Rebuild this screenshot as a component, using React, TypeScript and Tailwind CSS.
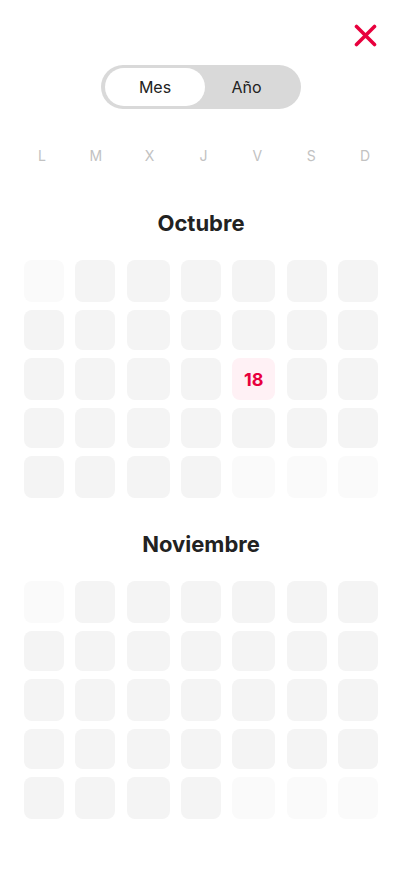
import React from 'react';

const days = ['L', 'M', 'X', 'J', 'V', 'S', 'D'];

type Cell = { faded?: boolean; today?: string };

function buildMonth(fadedStart: number[], fadedEnd: number[], today?: { index: number; label: string }): Cell[] {
  const cells: Cell[] = [];
  for (let i = 0; i < 35; i++) {
    const cell: Cell = {};
    if (fadedStart.includes(i) || fadedEnd.includes(i)) cell.faded = true;
    if (today && today.index === i) cell.today = today.label;
    cells.push(cell);
  }
  return cells;
}

const months = [
  { name: 'Octubre', cells: buildMonth([0], [32, 33, 34], { index: 18, label: '18' }) },
  { name: 'Noviembre', cells: buildMonth([0], [32, 33, 34]) },
];

function MonthGrid({ name, cells, first }: { name: string; cells: Cell[]; first?: boolean }) {
  return (
    <section className={first ? 'mt-[43px]' : 'mt-[32px]'}>
      <h2 className="text-center text-[22px] leading-[28px] font-bold text-[#222222]">{name}</h2>
      <div className="mt-[23px] grid grid-cols-[40px_40px_43px_40px_43px_40px_40px] grid-rows-[42px_40px_42px_40px_42px] justify-between gap-y-2 px-[24px]">
        {cells.map((c, i) => (
          <div
            key={i}
            className={
              c.today
                ? 'flex items-center justify-center rounded-[8px] bg-[#fff1f5] text-[18px] font-bold text-[#e8003d]'
                : c.faded
                ? 'rounded-[8px] bg-[#fafafa]'
                : 'rounded-[8px] bg-[#f4f4f4]'
            }
          >
            {c.today}
          </div>
        ))}
      </div>
    </section>
  );
}

export default function App() {
  return (
    <div className="min-h-[874px] w-full bg-white pt-[24px] font-['Inter','Liberation_Sans',sans-serif]">
      <div className="flex justify-end pr-[25px]">
        <button aria-label="Cerrar" className="h-[23px] w-[23px]">
          <svg viewBox="0 0 23 23" width="23" height="23" fill="none" stroke="#e8003d" strokeWidth="3.6" strokeLinecap="round">
            <path d="M2.5 2.5L20.5 20.5M20.5 2.5L2.5 20.5" />
          </svg>
        </button>
      </div>

      <div className="mx-auto mt-[18px] flex h-[44px] w-[200px] items-center rounded-full bg-[#d9d9d9] pl-[4px] pr-[3px]">
        <div className="flex h-[38px] w-[100px] items-center justify-center rounded-full bg-white text-[16px] text-[#222222]">
          Mes
        </div>
        <div className="flex flex-1 items-center justify-center pr-[10px] text-[16px] text-[#222222]">Año</div>
      </div>

      <div className="mt-[37px] grid grid-cols-7 pl-[15px] pr-[10px] text-center text-[14px] leading-[20px] text-[#c2c2c2]">
        {days.map((d) => (
          <span key={d}>{d}</span>
        ))}
      </div>

      {months.map((m, i) => (
        <MonthGrid key={m.name} name={m.name} cells={m.cells} first={i === 0} />
      ))}
    </div>
  );
}
